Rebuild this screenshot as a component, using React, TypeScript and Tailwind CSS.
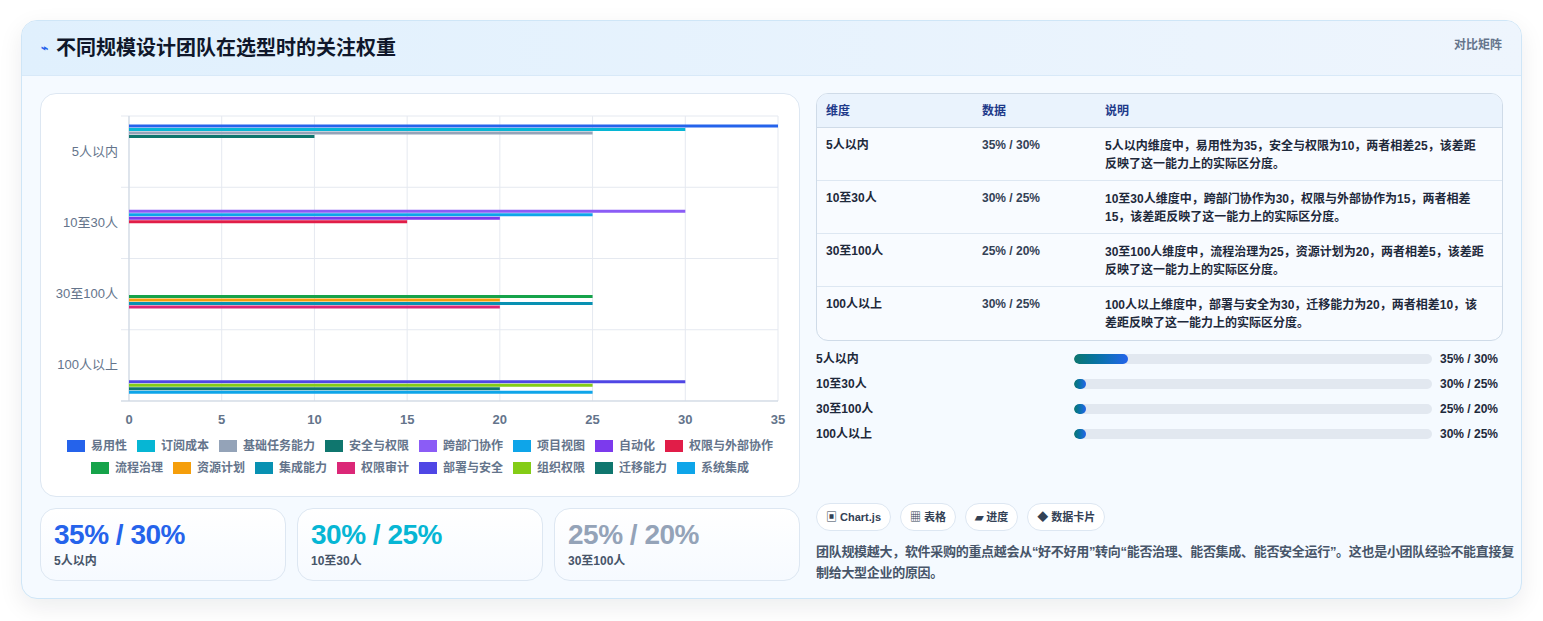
import React from "react";

const series = [
  { name: "易用性", color: "#2563eb", cat: 0, v: 35 },
  { name: "订阅成本", color: "#06b6d4", cat: 0, v: 30 },
  { name: "基础任务能力", color: "#94a3b8", cat: 0, v: 25 },
  { name: "安全与权限", color: "#0f766e", cat: 0, v: 10 },
  { name: "跨部门协作", color: "#8b5cf6", cat: 1, v: 30 },
  { name: "项目视图", color: "#0ea5e9", cat: 1, v: 25 },
  { name: "自动化", color: "#7c3aed", cat: 1, v: 20 },
  { name: "权限与外部协作", color: "#e11d48", cat: 1, v: 15 },
  { name: "流程治理", color: "#16a34a", cat: 2, v: 25 },
  { name: "资源计划", color: "#f59e0b", cat: 2, v: 20 },
  { name: "集成能力", color: "#0891b2", cat: 2, v: 25 },
  { name: "权限审计", color: "#db2777", cat: 2, v: 20 },
  { name: "部署与安全", color: "#4f46e5", cat: 3, v: 30 },
  { name: "组织权限", color: "#84cc16", cat: 3, v: 25 },
  { name: "迁移能力", color: "#0f766e", cat: 3, v: 20 },
  { name: "系统集成", color: "#0ea5e9", cat: 3, v: 25 },
];

const cats = ["5人以内", "10至30人", "30至100人", "100人以上"];

const rows = [
  { d: "5人以内", v: "35% / 30%", t: "5人以内维度中，易用性为35，安全与权限为10，两者相差25，该差距反映了这一能力上的实际区分度。" },
  { d: "10至30人", v: "30% / 25%", t: "10至30人维度中，跨部门协作为30，权限与外部协作为15，两者相差15，该差距反映了这一能力上的实际区分度。" },
  { d: "30至100人", v: "25% / 20%", t: "30至100人维度中，流程治理为25，资源计划为20，两者相差5，该差距反映了这一能力上的实际区分度。" },
  { d: "100人以上", v: "30% / 25%", t: "100人以上维度中，部署与安全为30，迁移能力为20，两者相差10，该差距反映了这一能力上的实际区分度。" },
];

const font = { fontFamily: '"Liberation Sans", "Noto Sans CJK SC", sans-serif' };

function Chart() {
  const x0 = 88, x1 = 737, y0 = 22, band = 71.25;
  const sx = (v: number) => x0 + ((x1 - x0) * v) / 35;
  return (
    <svg width="758" height="338" className="block">
      {[0, 5, 10, 15, 20, 25, 30, 35].map((t) => (
        <g key={t}>
          <line x1={sx(t)} x2={sx(t)} y1={y0} y2={y0 + band * 4} stroke="#e5e9f0" />
          <text x={sx(t)} y={330} textAnchor="middle" fontSize="13" fontWeight="700" fill="#64748b">{t}</text>
        </g>
      ))}
      {[0, 1, 2, 3, 4].map((i) => (
        <line key={i} x1={x0 - 8} x2={x1} y1={y0 + band * i} y2={y0 + band * i} stroke="#e5e9f0" />
      ))}
      <line x1={x0} x2={x0} y1={y0} y2={y0 + band * 4} stroke="#cbd5e1" />
      <line x1={x0 - 8} x2={x1} y1={y0 + band * 4} y2={y0 + band * 4} stroke="#cbd5e1" />
      {cats.map((c, i) => (
        <text key={c} x={77} y={y0 + band * i + band / 2 + 4} textAnchor="end" fontSize="13" fill="#64748b">{c}</text>
      ))}
      {series.map((s, i) => (
        <rect key={i} x={x0} y={y0 + s.cat * band + 8.5 + s.cat * 14 + (i % 4) * 3.5} width={sx(s.v) - x0} height={3} fill={s.color} />
      ))}
    </svg>
  );
}

export default function App() {
  return (
    <div className="w-[1543px] h-[621px] bg-white pt-5 pl-[21px]" style={font}>
      <div className="w-[1501px] h-[579px] rounded-2xl border border-[#cfe6f7] bg-[#f5faff] shadow-[0_8px_24px_rgba(15,23,42,0.08)] overflow-hidden">
        <div className="h-[55px] bg-gradient-to-r from-[#e0f0fd] to-[#eef5fd] border-b border-[#d8e9f8] flex items-center justify-between px-[19px]">
          <div className="flex items-center gap-2">
            <span className="text-[#2563eb] text-xs font-bold">⌁</span>
            <span className="text-[20px] font-semibold text-[#0f172a]">不同规模设计团队在选型时的关注权重</span>
          </div>
          <span className="text-xs font-bold text-[#64748b] self-start mt-[16px]">对比矩阵</span>
        </div>
        <div className="flex gap-4 px-[18px] pt-[17px]">
          <div className="w-[761px] flex flex-col gap-[11px]">
            <div className="h-[404px] bg-white rounded-2xl border border-[#dde7f2]">
              <Chart />
              <div className="flex flex-wrap justify-center gap-x-[10px] gap-y-[6px] px-6 mt-[6px]">
                {series.map((s, i) => (
                  <div key={i} className="flex items-center gap-[6px] text-xs font-bold text-[#64748b]">
                    <span className="w-[18px] h-[12px] inline-block" style={{ background: s.color }} />
                    {s.name}
                  </div>
                ))}
              </div>
            </div>
            <div className="grid grid-cols-3 gap-[11px]">
              {[
                ["35% / 30%", "5人以内", "text-[#2563eb]"],
                ["30% / 25%", "10至30人", "text-[#06b6d4]"],
                ["25% / 20%", "30至100人", "text-[#94a3b8]"],
              ].map(([v, l, c]) => (
                <div key={l} className="h-[73px] rounded-2xl border border-[#dde7f2] bg-gradient-to-b from-white to-[#f6faff] px-[13px] pt-[10px]">
                  <div className={`text-[28px] font-bold leading-[32px] tracking-[-0.5px] ${c}`}>{v}</div>
                  <div className="text-xs font-bold text-[#475569] mt-[2px]">{l}</div>
                </div>
              ))}
            </div>
          </div>
          <div className="w-[688px] flex flex-col">
            <div className="rounded-xl border border-[#cfdbe8] overflow-hidden bg-[#f8fbff]">
              <div className="flex h-[34px] items-center bg-[#eaf3fd] border-b border-[#cfdbe8] text-xs font-bold text-[#1e3a8a]">
                <div className="w-[165px] pl-[9px]">维度</div>
                <div className="w-[123px]">数据</div>
                <div className="flex-1">说明</div>
              </div>
              {rows.map((r, i) => (
                <div key={r.d} className={`flex h-[53px] pt-[9px] text-xs font-bold text-[#1e293b] ${i < 3 ? "border-b border-[#dde7f2]" : ""}`}>
                  <div className="w-[165px] pl-[9px]">{r.d}</div>
                  <div className="w-[123px] text-[#334155]">{r.v}</div>
                  <div className="flex-1 pr-4 leading-[18px]">{r.t}</div>
                </div>
              ))}
            </div>
            <div className="flex flex-col gap-[7px] mt-[9px]">
              {rows.map((r, i) => (
                <div key={r.d} className="flex items-center h-[18px] text-xs font-bold text-[#1e293b]">
                  <div className="w-[258px]">{r.d}</div>
                  <div className="w-[358px] h-[10px] rounded-full bg-[#e2e8f0] overflow-hidden">
                    <div className={`h-full rounded-full bg-gradient-to-r from-[#0f766e] to-[#2563eb] ${i === 0 ? "w-[54px]" : "w-[12px]"}`} />
                  </div>
                  <div className="ml-2">{r.v}</div>
                </div>
              ))}
            </div>
            <div className="flex gap-[9px] mt-[60px]">
              {["▣ Chart.js", "▦ 表格", "▰ 进度", "◆ 数据卡片"].map((c) => (
                <span key={c} className="h-[28px] px-[9px] flex items-center rounded-full border border-[#dde7f2] bg-white text-[11px] font-bold text-[#334155]">{c}</span>
              ))}
            </div>
            <p className="mt-[10px] -mr-3 text-[13px] font-semibold leading-[21px] tracking-[-0.3px] text-[#475569]">
              团队规模越大，软件采购的重点越会从“好不好用”转向“能否治理、能否集成、能否安全运行”。这也是小团队经验不能直接复制给大型企业的原因。
            </p>
          </div>
        </div>
      </div>
    </div>
  );
}
